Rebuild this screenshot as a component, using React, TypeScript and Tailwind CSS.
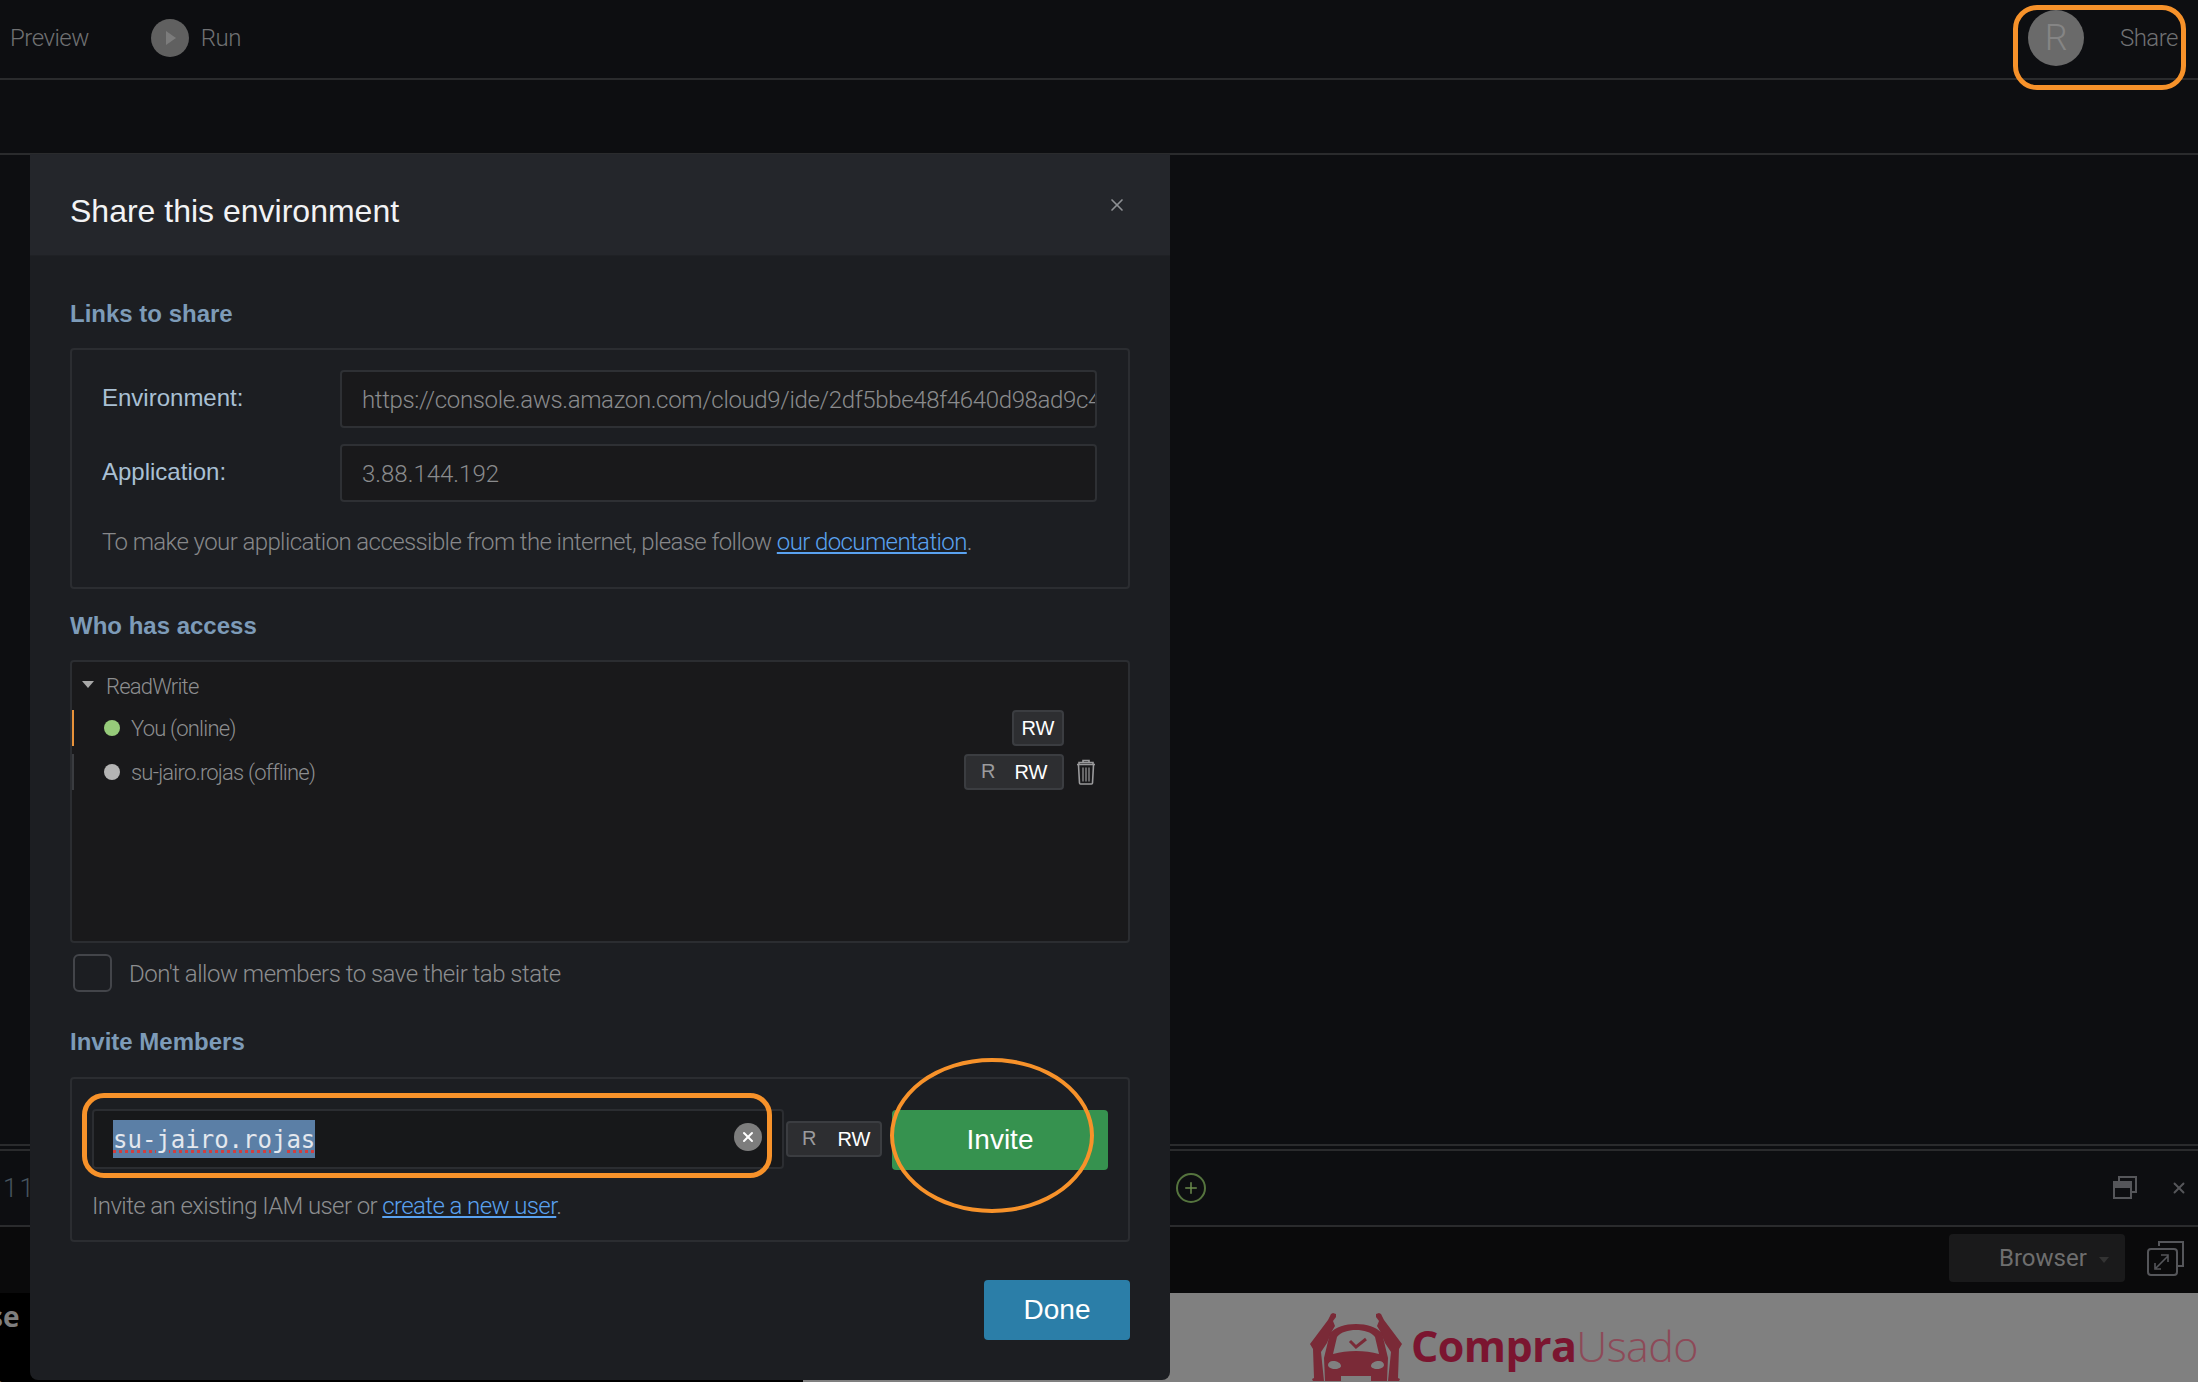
import { Plus, X } from 'lucide-react';

const sans = "font-['Liberation_Sans',Arial,sans-serif]";

function SectionTitle({ children }: { children: React.ReactNode }) {
    return <h3 className="text-[24px] leading-[28px] font-bold text-[#7d9bb8]">{children}</h3>;
}

function TrashIcon() {
    return (
        <svg width="20" height="26" viewBox="0 0 20 26" fill="none" stroke="#9a9a9c" strokeWidth="1.6">
            <path d="M1 5.5h18M7 3.5V1.5h6v2M3 3.5h14v2H3z" />
            <path d="M2.5 6l1 18a1 1 0 0 0 1 1h11a1 1 0 0 0 1-1l1-18" />
            <path d="M7 8.5v14M10 8.5v14M13 8.5v14" strokeWidth="1.2" />
        </svg>
    );
}

function RoleToggle({ className }: { className: string }) {
    return (
        <div className={`flex items-center rounded-[4px] border-2 border-[#3b3d41] bg-[#2d2e31] text-[20px] font-normal tracking-normal ${sans} ${className}`}>
            <span className="-mt-[3px] text-[#9b9b9d]">R</span>
            <span className="text-white">RW</span>
        </div>
    );
}

function CarLogo() {
    return (
        <svg width="92" height="68" viewBox="0 0 92 68" fill="#7a2a37">
            <path d="M21 1l2-1 3 1 0 3-3 4 2 5-3 5-5 12-6 9 3 29H3l-1-2 2-1-1-29-3-5 9-12 9-12z" />
            <path d="M71 1l-2-1-3 1 0 3 3 4-2 5 3 5 5 12 6 9-3 29h11l1-2-2-1 1-29 3-5-9-12-9-12z" />
            <path fillRule="evenodd" d="M46 11c11 0 20 3 26 9l6 25-1 23H61v-5H31v5H15l-1-23 6-25c6-6 15-9 26-9zm0 6c-8 0-15 2-19 7l-4 17c7-2 15-3 23-3s16 1 23 3l-4-17c-4-5-11-7-19-7zM23 48c-3 0-5 2-5 4s3 4 7 4 6-2 6-3c0-3-4-5-8-5zm46 0c-4 0-8 2-8 5 0 1 2 3 6 3s7-2 7-4-2-4-5-4z" />
            <path d="M40 28l6 6 10-8" fill="none" stroke="#7a2a37" strokeWidth="3" />
        </svg>
    );
}

function Background() {
    return (
        <div className="flex h-full flex-col bg-[#0d0e11]">
            <div className="flex h-[80px] shrink-0 items-center border-b-2 border-[#2a2b2d] pb-[2px] font-['Roboto',sans-serif] text-[24px] font-light tracking-[-0.5px] text-[#707173]">
                <span className="ml-[10px]">Preview</span>
                <span className="ml-[62px] flex h-[38px] w-[38px] items-center justify-center rounded-full bg-[#606060]">
                    <span className="ml-[3px] h-0 w-0 border-y-[7px] border-l-[10px] border-y-transparent border-l-[#7c7c7c]" />
                </span>
                <span className="ml-[12px]">Run</span>
                <div className="ml-auto mr-[20px] flex items-center">
                    <span className="flex h-[56px] w-[56px] items-center justify-center rounded-full bg-[#6a6a6a] text-[36px] text-[#858585]">R</span>
                    <span className="ml-[36px]">Share</span>
                </div>
            </div>
            <div className="h-[75px] shrink-0 border-b-2 border-[#2a2b2d]" />
            <div className="h-[991px] shrink-0 border-b-2 border-[#2a2b2d]" />
            <div className="mt-[3px] flex h-[78px] shrink-0 items-center border-y-2 border-[#2a2b2d] pr-[10px] text-[#55565a]">
                <span className="ml-[3px] font-['Roboto',sans-serif] text-[26px] font-light tracking-[2px] text-[#46535e]">11</span>
                <span className="ml-[1140px] flex h-[30px] w-[30px] items-center justify-center rounded-full border-2 border-[#55743e] text-[#6b8c4c]">
                    <Plus size={18} strokeWidth={2} />
                </span>
                <svg className="ml-auto" width="25" height="24" viewBox="0 0 25 24" fill="none" stroke="#55565a" strokeWidth="2">
                    <path d="M7 5V1h17v15h-4" />
                    <rect x="2" y="6" width="17" height="16" />
                    <path d="M2 7h17v4H2z" fill="#55565a" />
                </svg>
                <X className="ml-[33px]" size={18} strokeWidth={2.5} />
            </div>
            <div className="flex h-[66px] shrink-0 items-center bg-[#0a0a0b] pb-[4px]">
                <div className="ml-auto flex h-[48px] w-[176px] items-center rounded-[4px] bg-[#1a1a1b] pl-[50px] font-['Roboto',sans-serif] text-[24px] text-[#6e6e6e]">
                    Browser
                    <span className="ml-[12px] mt-[4px] h-0 w-0 border-x-[5px] border-t-[6px] border-x-transparent border-t-[#333]" />
                </div>
                <svg className="ml-[22px] mr-[14px]" width="37" height="35" viewBox="0 0 37 35" fill="none" stroke="#55565a" strokeWidth="2">
                    <path d="M12 5V1h24v24h-5" />
                    <rect x="1" y="8" width="29" height="26" rx="3" />
                    <path d="M9 27l12-12M14 14h7v7M8 22v6h6" strokeWidth="1.6" />
                </svg>
            </div>
            <div className="flex flex-1">
                <div className="relative w-[803px] overflow-hidden bg-black">
                    <span className="absolute -left-[11px] top-[2px] font-['Open_Sans',sans-serif] text-[28px] font-bold text-[#7e7e7e]">se</span>
                    <span className="absolute -left-[13px] top-[72px] font-['Open_Sans',sans-serif] text-[28px] font-bold text-[#7e7e7e]">n</span>
                </div>
                <div className="flex flex-1 items-start bg-[#808080] pl-[507px] pt-[20px]">
                    <CarLogo />
                    <span className="ml-[9px] mt-[9px] font-['Open_Sans',sans-serif] text-[43px] leading-[48px] font-bold tracking-[-0.6px] text-[#7b1530]">
                        Compra<span className="font-light text-[#8d4a58]">Usado</span>
                    </span>
                </div>
            </div>
        </div>
    );
}

function ShareModal() {
    return (
        <div className={`absolute left-[30px] top-[154px] flex h-[1226px] w-[1140px] flex-col overflow-hidden rounded-b-[8px] bg-[#1c1e22] ${sans}`}>
            <div className="relative flex h-[102px] shrink-0 items-center border-b border-[#1f2125] bg-[#24262b] pl-[40px] pt-[12px]">
                <h2 className="text-[32px] font-normal text-[#f2f3f5]">Share this environment</h2>
                <X className="absolute right-[43px] top-[41px] text-[#8e9094]" size={20} strokeWidth={2} />
            </div>
            <div className="flex flex-1 flex-col px-[40px] pt-[44px]">
                <SectionTitle>Links to share</SectionTitle>
                <div className="mt-[20px] h-[241px] rounded-[4px] border-2 border-[#2b2d31] pl-[30px] pr-[31px] pt-[20px]">
                    <div className="flex h-[58px] items-center">
                        <label className="-mt-[3px] w-[238px] text-[24px] text-[#a9c0d4]">Environment:</label>
                        <div className="flex h-[58px] flex-1 items-center overflow-hidden rounded-[4px] border-2 border-[#2e3034] bg-[#19191b] pl-[20px] pr-[2px] pt-[2px] font-['Roboto',sans-serif] text-[24px] font-light tracking-[-0.35px] whitespace-nowrap text-[#8a8b8d]">
                            https://console.aws.amazon.com/cloud9/ide/2df5bbe48f4640d98ad9c4966b
                        </div>
                    </div>
                    <div className="mt-[16px] flex h-[58px] items-center">
                        <label className="-mt-[3px] w-[238px] text-[24px] text-[#a9c0d4]">Application:</label>
                        <div className="flex h-[58px] flex-1 items-center rounded-[4px] border-2 border-[#2e3034] bg-[#19191b] pl-[20px] pt-[2px] font-['Roboto',sans-serif] text-[24px] font-light text-[#8a8b8d]">
                            3.88.144.192
                        </div>
                    </div>
                    <p className="mt-[24px] font-['Roboto',sans-serif] text-[24px] leading-[32px] font-light tracking-[-0.6px] text-[#87888a]">
                        To make your application accessible from the internet, please follow{' '}
                        <a className="text-[#5aa2f0] underline">our documentation</a>.
                    </p>
                </div>
                <div className="mt-[23px]">
                    <SectionTitle>Who has access</SectionTitle>
                </div>
                <div className="mt-[20px] h-[283px] rounded-[4px] border-2 border-[#2b2d31] bg-[#19191b] font-['Roboto',sans-serif] text-[22px] font-light tracking-[-0.8px] text-[#8d8e90]">
                    <div className="flex h-[48px] items-center pl-[10px]">
                        <span className="-mt-[4px] h-0 w-0 border-x-[6px] border-t-[7px] border-x-transparent border-t-[#a8a8a8]" />
                        <span className="ml-[12px]">ReadWrite</span>
                    </div>
                    <div className="flex h-[36px] items-center border-l-2 border-[#e8923a] pl-[30px]">
                        <span className="h-[16px] w-[16px] rounded-full bg-[#96cb7a]" />
                        <span className="ml-[11px]">You (online)</span>
                        <div className={`ml-auto mr-[64px] flex h-[36px] w-[52px] items-center justify-center rounded-[4px] border-2 border-[#3b3d41] bg-[#2d2e31] text-[20px] font-normal tracking-normal text-white ${sans}`}>RW</div>
                    </div>
                    <div className="mt-[8px] flex h-[36px] items-center border-l-2 border-[#3a3c40] pl-[30px]">
                        <span className="h-[16px] w-[16px] rounded-full bg-[#b4b4b4]" />
                        <span className="ml-[11px]">su-jairo.rojas (offline)</span>
                        <RoleToggle className="ml-auto h-[36px] w-[100px] gap-[19px] pl-[15px]" />
                        <span className="ml-[12px] mr-[32px] -mt-[1px]"><TrashIcon /></span>
                    </div>
                </div>
                <div className="mt-[10px] flex h-[40px] items-center pl-[3px]">
                    <span className="h-[38px] w-[39px] rounded-[6px] border-2 border-[#43454a]" />
                    <span className="ml-[17px] pt-[2px] font-['Roboto',sans-serif] text-[24px] font-light tracking-[-0.5px] text-[#8d8e90]">Don't allow members to save their tab state</span>
                </div>
                <div className="mt-[35px]">
                    <SectionTitle>Invite Members</SectionTitle>
                </div>
                <div className="mt-[21px] h-[165px] rounded-[4px] border-2 border-[#2b2d31] pl-[20px] pt-[29px]">
                    <div className="flex items-center">
                        <div className="relative flex h-[60px] w-[692px] items-center rounded-[4px] border-2 border-[#2b2d31] bg-[#17181a] pl-[19px]">
                            <span className="h-[38px] bg-[#5b7fa6] font-['DejaVu_Sans_Mono',monospace] text-[24px] leading-[40px] text-[#e4e8ee] underline decoration-[#d23f3f] decoration-dotted decoration-[3px] underline-offset-[2px]">su-jairo.rojas</span>
                            <span className="absolute right-[20px] top-[12px] flex h-[28px] w-[28px] items-center justify-center rounded-full bg-[#7d7d7d] text-white">
                                <X size={16} strokeWidth={3} />
                            </span>
                        </div>
                        <RoleToggle className="ml-[2px] h-[36px] w-[96px] gap-[21px] pl-[14px]" />
                        <button className="ml-[10px] mt-[2px] h-[60px] w-[216px] rounded-[4px] bg-[#36924f] text-[28px] text-white">Invite</button>
                    </div>
                    <p className="mt-[20px] font-['Roboto',sans-serif] text-[24px] leading-[32px] font-light tracking-[-0.6px] text-[#8d8e90]">
                        Invite an existing IAM user or <a className="text-[#5aa2f0] underline">create a new user</a>.
                    </p>
                </div>
                <div className="mt-[38px] flex justify-end">
                    <button className="h-[60px] w-[146px] rounded-[4px] bg-[#2b7ea8] text-[28px] text-white">Done</button>
                </div>
            </div>
        </div>
    );
}

export default function App() {
    return (
        <div className="relative h-[1382px] w-[2198px] overflow-hidden">
            <Background />
            <ShareModal />
            {/* orange annotations drawn on top of the screenshot */}
            <div className="absolute left-[2013px] top-[5px] h-[85px] w-[173px] rounded-[24px] border-[5px] border-[#f7922a]" />
            <div className="absolute left-[82px] top-[1093px] h-[85px] w-[690px] rounded-[22px] border-[5px] border-[#f7922a]" />
            <div className="absolute left-[890px] top-[1058px] h-[155px] w-[204px] rounded-[50%] border-[4px] border-[#f7922a]" />
        </div>
    );
}
